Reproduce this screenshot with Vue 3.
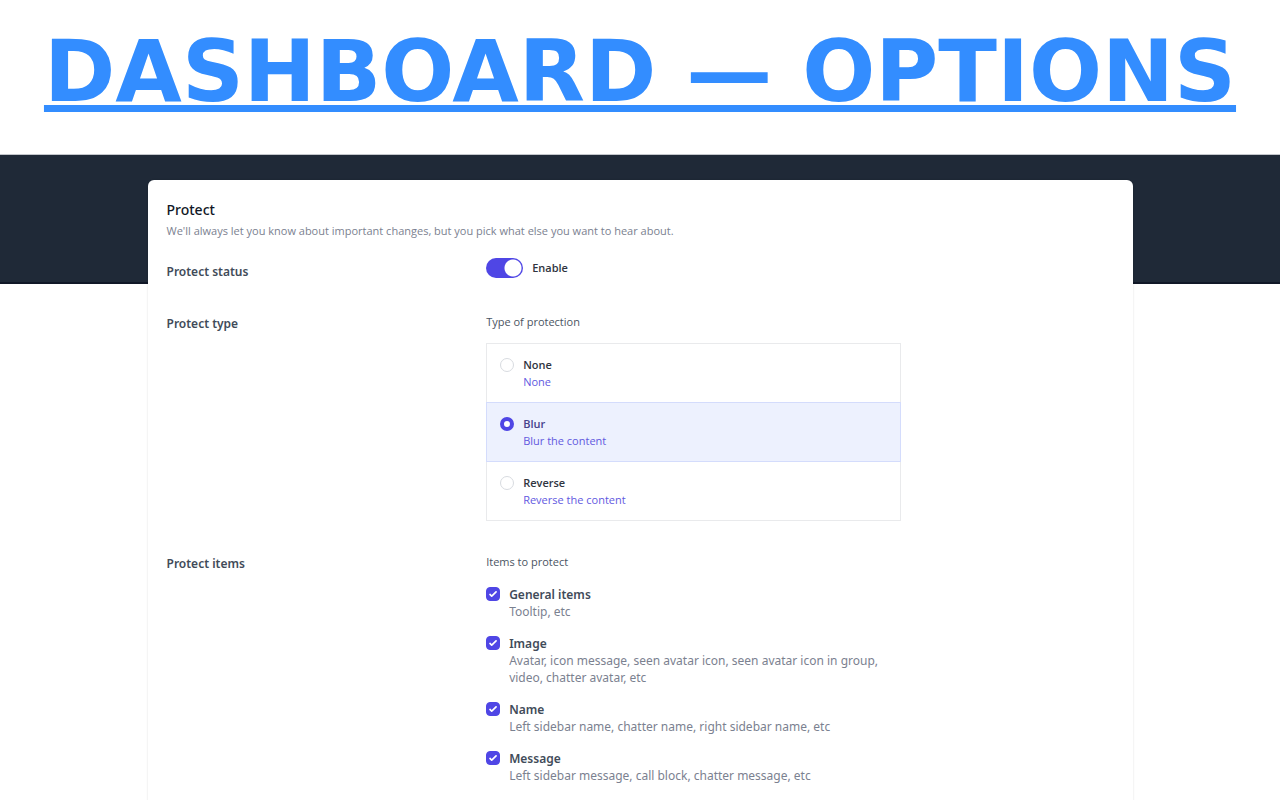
<script setup>
import { ref } from 'vue'

const enabled = ref(true)
const protection = ref('blur')

const types = [
  { value: 'none', name: 'None', note: 'None' },
  { value: 'blur', name: 'Blur', note: 'Blur the content' },
  { value: 'reverse', name: 'Reverse', note: 'Reverse the content' },
]

const items = ref([
  { id: 'general', name: 'General items', note: 'Tooltip, etc', on: true },
  {
    id: 'image',
    name: 'Image',
    note: 'Avatar, icon message, seen avatar icon, seen avatar icon in group, video, chatter avatar, etc',
    on: true,
  },
  { id: 'name', name: 'Name', note: 'Left sidebar name, chatter name, right sidebar name, etc', on: true },
  { id: 'message', name: 'Message', note: 'Left sidebar message, call block, chatter message, etc', on: true },
])
</script>

<template>
  <div class="page">
    <header class="hero">
      <h1><a href="#options">DASHBOARD — OPTIONS</a></h1>
    </header>

    <main class="stage">
      <section id="options" class="card">
        <h2>Protect</h2>
        <p class="lead">We'll always let you know about important changes, but you pick what else you want to hear about.</p>

        <div class="row status">
          <h3>Protect status</h3>
          <label class="switch">
            <input v-model="enabled" type="checkbox" role="switch" />
            <span>Enable</span>
          </label>
        </div>

        <div class="row type">
          <h3 id="type-title">Protect type</h3>
          <div class="field" role="radiogroup" aria-labelledby="type-title">
            <p class="hint">Type of protection</p>
            <div class="choices">
              <label
                v-for="t in types"
                :key="t.value"
                class="choice"
                :class="{ active: protection === t.value }"
              >
                <input v-model="protection" type="radio" name="protection" :value="t.value" />
                <span class="choice-text">
                  <strong>{{ t.name }}</strong>
                  <span>{{ t.note }}</span>
                </span>
              </label>
            </div>
          </div>
        </div>

        <div class="row">
          <h3 id="items-title">Protect items</h3>
          <div class="field" role="group" aria-labelledby="items-title">
            <p class="hint">Items to protect</p>
            <div class="checks">
              <div v-for="item in items" :key="item.id" class="check">
                <span class="box">
                  <input :id="item.id" v-model="item.on" type="checkbox" />
                  <svg v-if="item.on" viewBox="0 0 16 16" aria-hidden="true">
                    <path d="M12.2 4.8a1 1 0 0 1 0 1.4l-5 5a1 1 0 0 1-1.4 0l-2-2a1 1 0 0 1 1.4-1.4L6.5 9.1l4.3-4.3a1 1 0 0 1 1.4 0z" fill="#fff" />
                  </svg>
                </span>
                <label :for="item.id">
                  <strong>{{ item.name }}</strong>
                  <span>{{ item.note }}</span>
                </label>
              </div>
            </div>
          </div>
        </div>
      </section>
    </main>
  </div>
</template>

<style>
body {
  background: #fff;
}
</style>

<style scoped>
.page {
  height: 100vh;
  overflow: hidden;
  font-family: "Open Sans", "Noto Sans", sans-serif;
  font-size: 11px;
  line-height: 16px;
  color: #4b5563;
}

h1, h2, h3, p {
  margin: 0;
}

input {
  appearance: none;
  margin: 0;
  flex: none;
}

.hero {
  height: 154px;
  display: flex;
  justify-content: center;
  box-sizing: border-box;
  padding-top: 21px;
}

h1 {
  font-family: "DejaVu Sans", sans-serif;
  font-size: 86px;
  line-height: 100px;
  font-weight: 700;
  white-space: nowrap;
}

h1 a {
  color: #338dff;
  text-decoration: underline;
  text-decoration-thickness: 7px;
  text-underline-offset: 4px;
  text-decoration-skip-ink: none;
}

.stage {
  padding: 25px 24px 0;
  border-top: 1px solid #c3c6cb;
  background: linear-gradient(#1f2937 127px, #111827 127px, #111827 129px, #fff 129px);
}

.card {
  max-width: 985px;
  box-sizing: border-box;
  margin: 0 auto;
  padding: 20px 19px 24px;
  background: #fff;
  border-radius: 6px;
  box-shadow: 0 0 2px rgba(0, 0, 0, 0.16);
}

h2 {
  font-family: "Noto Sans", sans-serif;
  font-size: 14px;
  line-height: 20px;
  font-weight: 500;
  color: #111827;
}

.lead {
  margin-top: 3px;
  color: #7b8190;
}

.row {
  display: grid;
  grid-template-columns: 1fr 2fr;
  column-gap: 6px;
}

.status {
  margin-top: 18px;
}

.type {
  margin-top: 34px;
  margin-bottom: 34px;
}

h3 {
  font-family: "Noto Sans", sans-serif;
  font-size: 12px;
  line-height: 18px;
  font-weight: 600;
  color: #414b59;
}

.status h3 {
  padding-top: 6px;
}

.switch {
  display: flex;
  align-items: center;
  gap: 9px;
  height: 21px;
  font-weight: 600;
  color: #30353f;
}

.switch input {
  width: 37px;
  height: 20px;
  border-radius: 10px;
  background: radial-gradient(circle at 10px 50%, #fff 8px, transparent 9px) #d1d5db;
}

.switch input:checked {
  background: radial-gradient(circle at 27px 50%, #fff 8px, transparent 9px) #4f46e5;
}

.field {
  max-width: 415px;
}

.hint {
  line-height: 14px;
}

.choices {
  margin-top: 14px;
  border: 1px solid #e9eaec;
}

.choice {
  display: flex;
  gap: 9px;
  padding: 12px 13px;
  border: 1px solid transparent;
  margin: -1px;
}

.choice.active {
  background: #edf1fe;
  border-color: #d4dcfc;
}

.choice input {
  width: 14px;
  height: 14px;
  box-sizing: border-box;
  margin-top: 2px;
  border: 1px solid #d8dbe0;
  border-radius: 50%;
  background: #fff;
}

.choice input:checked {
  border: 4px solid #4f46e5;
}

.choice-text {
  display: grid;
  line-height: 17px;
  color: #6259df;
}

.choice-text strong {
  font-weight: 600;
  color: #30353f;
}

.choice.active strong {
  color: #46418c;
}

.checks {
  display: grid;
  gap: 15px;
  margin-top: 17px;
}

.check {
  display: flex;
  gap: 9px;
  font-family: "Noto Sans", sans-serif;
  font-size: 12px;
  line-height: 17px;
  color: #7b8190;
}

.box {
  display: grid;
  width: 14px;
  height: 14px;
  flex: none;
  margin-top: 1px;
}

.box > * {
  grid-area: 1 / 1;
  width: 14px;
  height: 14px;
  pointer-events: none;
}

.box input {
  border: 1px solid #d1d5db;
  box-sizing: border-box;
  border-radius: 4px;
  pointer-events: auto;
}

.box input:checked {
  border-color: #4f46e5;
  background: #4f46e5;
}

.check label {
  display: grid;
}

.check strong {
  font-weight: 600;
  color: #414b59;
}
</style>
